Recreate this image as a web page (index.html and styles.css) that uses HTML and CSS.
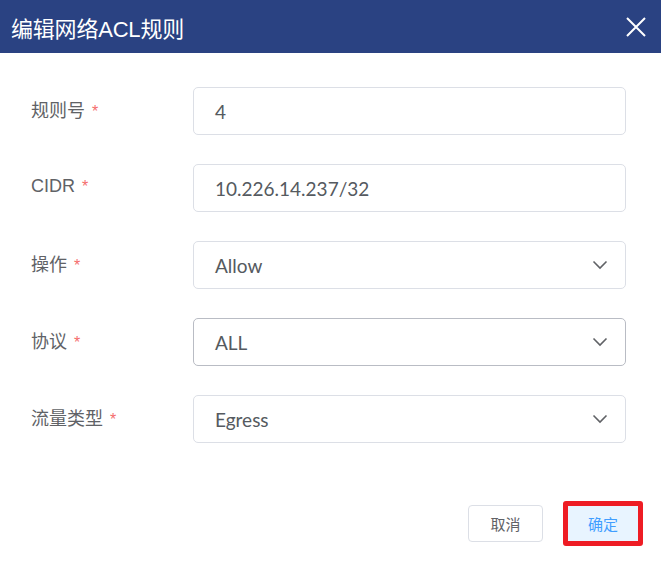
FILE: index.html
```html
<!DOCTYPE html>
<html lang="zh">
<head>
<meta charset="utf-8">
<link rel="stylesheet" href="styles.css">
</head>
<body>
<div class="dialog">
  <div class="header">
    <div class="title">编辑网络ACL规则</div>
    <svg class="close" width="22" height="22" viewBox="0 0 22 22"><path d="M2 2 L20 20 M20 2 L2 20" stroke="#fff" stroke-width="2" fill="none"/></svg>
  </div>
  <div class="body">
    <div class="row">
      <div class="label">规则号<span class="req">*</span></div>
      <div class="field"><span class="val">4</span></div>
    </div>
    <div class="row">
      <div class="label">CIDR<span class="req">*</span></div>
      <div class="field"><span class="val">10.226.14.237/32</span></div>
    </div>
    <div class="row">
      <div class="label">操作<span class="req">*</span></div>
      <div class="field"><span class="val">Allow</span><svg class="chev" width="16" height="10" viewBox="0 0 16 10"><path d="M1.5 1.5 L8 8 L14.5 1.5" stroke="#606266" stroke-width="1.6" fill="none"/></svg></div>
    </div>
    <div class="row">
      <div class="label">协议<span class="req">*</span></div>
      <div class="field hover"><span class="val">ALL</span><svg class="chev" width="16" height="10" viewBox="0 0 16 10"><path d="M1.5 1.5 L8 8 L14.5 1.5" stroke="#606266" stroke-width="1.6" fill="none"/></svg></div>
    </div>
    <div class="row">
      <div class="label">流量类型<span class="req">*</span></div>
      <div class="field"><span class="val">Egress</span><svg class="chev" width="16" height="10" viewBox="0 0 16 10"><path d="M1.5 1.5 L8 8 L14.5 1.5" stroke="#606266" stroke-width="1.6" fill="none"/></svg></div>
    </div>
  </div>
  <div class="footer">
    <button class="btn">取消</button>
    <div class="mark"><button class="btn primary">确定</button></div>
  </div>
</div>
</body>
</html>
```
FILE: styles.css
```css
html, body { margin: 0; padding: 0; background: #fff; }
body { font-family: Lato, "Noto Sans CJK SC", sans-serif; width: 661px; height: 564px; overflow: hidden; }
.dialog { width: 661px; }
.header {
  height: 53px; background: #2a4282; display: flex; align-items: center;
  justify-content: space-between; padding: 0 14px 0 11px;
}
.title { color: #fff; font-family: "Liberation Sans", "Noto Sans CJK SC", sans-serif; font-size: 22px; font-weight: 400; letter-spacing: -0.2px; }
.close { display: block; }
.body { padding: 34px 35px 0 31px; display: flex; flex-direction: column; gap: 29px; }
.row { display: flex; align-items: center; height: 48px; }
.label { width: 162px; font-size: 18px; color: #606266; font-family: "Liberation Sans", "Noto Sans CJK SC", sans-serif; margin-top: -4px; }
.req { color: #f56c6c; margin-left: 7px; font-size: 16px; }
.field {
  flex: 1; height: 48px; box-sizing: border-box; border: 1px solid #dcdfe6; border-radius: 5px;
  display: flex; align-items: center; justify-content: space-between; padding: 0 17px 0 21px;
}
.field.hover { border-color: #b9bcc4; }
.val { font-size: 19px; color: #555a60; }
.chev { display: block; }
.footer { display: flex; justify-content: flex-end; align-items: center; padding: 58px 18px 0 0; gap: 20px; }
.btn {
  width: 75px; height: 37px; box-sizing: border-box; border: 1px solid #dcdfe6; border-radius: 4px;
  background: #fff; color: #606266; font-size: 15px; font-family: "Noto Sans CJK SC", sans-serif; padding: 0;
}
.mark { border: 5px solid #ee1c24; border-radius: 3px; line-height: 0; }
.btn.primary { width: 70px; height: 35px; border: none; border-radius: 0; background: #e8f4ff; color: #409eff; }
```
